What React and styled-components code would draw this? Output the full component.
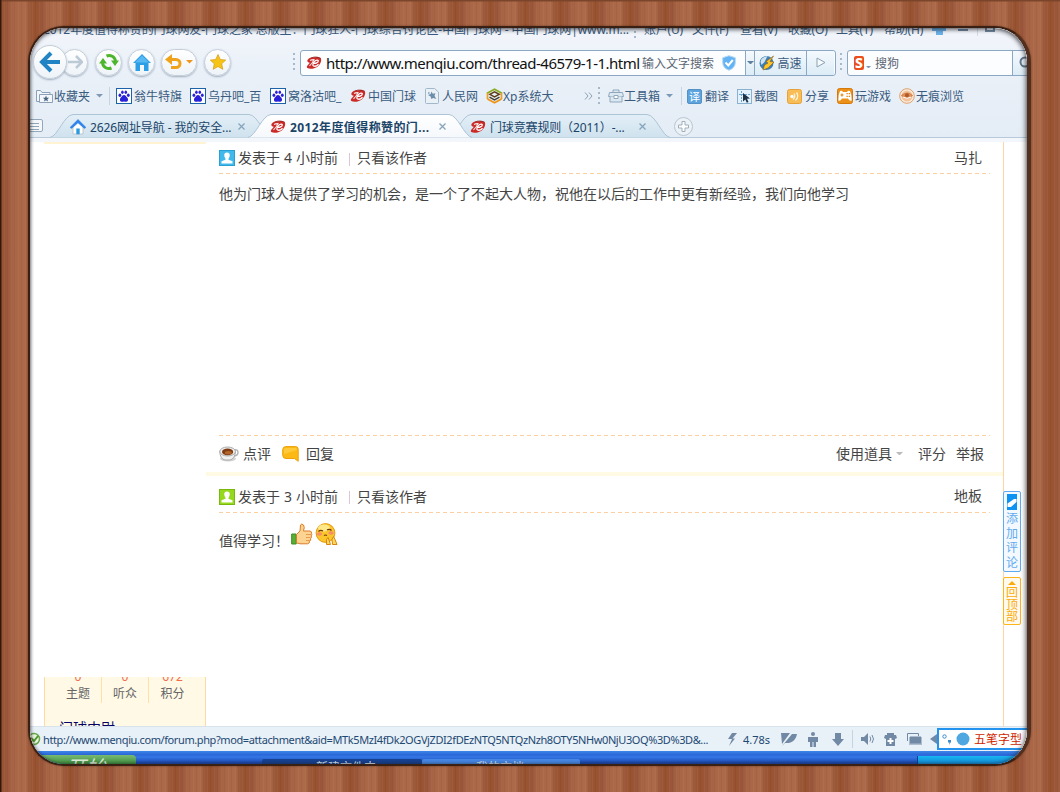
import styled, { createGlobalStyle } from 'styled-components'

const GlobalStyle = createGlobalStyle`
  *{ box-sizing:border-box; }
  body{
    margin:0;
    font-family:"Noto Sans","Noto Sans CJK SC",sans-serif;
    font-size:12px;
    overflow:hidden;
  }
  svg{ display:block; flex:none; }
`

/* ---------- icons ---------- */

const Paw = () => (
  <svg width="16" height="16" viewBox="0 0 16 16">
    <rect x=".5" y=".5" width="15" height="15" fill="#fff" stroke="#1c62a8" />
    <g fill="#2a22d8">
      <ellipse cx="3.9" cy="7.200" rx="1.400" ry="1.800" />
      <ellipse cx="6.400" cy="4.200" rx="1.300" ry="1.800" />
      <ellipse cx="9.800" cy="4.200" rx="1.300" ry="1.800" />
      <ellipse cx="12.300" cy="7.200" rx="1.400" ry="1.800" />
      <path d="M8 7c1.500 0 2 1.400 3.100 2.500 1.500 1.500 1.200 4-.7 4.200-1 .1-1.500-.3-2.400-.3s-1.400.4-2.400.3c-1.900-.2-2.200-2.700-.7-4.200C6 8.400 6.500 7 8 7z" />
    </g>
  </svg>
)

const Menqiu = () => (
  <svg width="16" height="16" viewBox="0 0 16 16">
    <path d="M1.500 5C3 2.500 6 2 9 2.300 11 1.600 13.500 2 15 3.500c.6 2-.3 4.500-1.500 6C12 12 8 14 4.500 13.800 2.500 13.700.8 13 .8 12c.2-1.500 1.700-2.500 3-4.300C2.200 7.600.8 6.700 1.500 5z" fill="#cb2a28" />
    <path d="M4 5.500c1.200-.8 2.500-1 4-.9C7.200 6.500 5.500 9 3.500 10.800" fill="none" stroke="#f8e6e4" strokeWidth="1.100" />
    <path d="M7.500 8.300c2 .4 4.600-.6 4.800-2.300 0-1.200-2.300-1-3.600.3C7 8 6.200 10.300 7.500 11c1.500.6 3.700-.4 5-1.800" fill="none" stroke="#fff" strokeWidth="1.300" />
    <path d="M5 3c3-1.300 6-1.400 9.500.2" fill="none" stroke="#8e2725" strokeWidth=".8" />
  </svg>
)

const Caret = ({ color = '#7e99b5', w = 8 }) => (
  <svg width={w} height={w / 2} viewBox="0 0 8 4"><path d="M0 0h8L4 4z" fill={color} /></svg>
)

const Folder = () => (
  <svg width="17" height="15" viewBox="0 0 17 15" fill="#f3f7fb" stroke="#8ba1b8">
    <path d="M.5 12.500v-11h4l1.500 2h8v2M.5 12.500h3" />
    <path d="M3.500 5.500h13v8h-13z" />
    <path d="M10 6.500l.9 2.200 2.300.1-1.800 1.400.6 2.300-2-1.300-2 1.300.6-2.300-1.800-1.400 2.300-.1z" fill="#47647f" stroke="none" />
  </svg>
)

const PageIcon = () => (
  <svg width="14" height="16" viewBox="0 0 14 16">
    <path d="M.5 1.500q0-1 1-1h8l4 3.500v10.500q0 1-1 1h-11q-1 0-1-1z" fill="#e9f1f7" stroke="#a2b7c9" />
    <path d="M6.500 3.500l1.300 2.200 2.700-.4-1 2.400 1.800 3.300-3-1-2 1-.7-2.500L3 7l2.700-.9z" fill="#6d8eab" />
    <circle cx="3.800" cy="5" r=".9" fill="#8ca6bc" />
  </svg>
)

const XpIcon = () => (
  <svg width="17" height="16" viewBox="0 0 17 16" fill="none" strokeWidth="1.700">
    <path d="M1.500 5.200V5L8.500 1.300 15.500 5v.2" stroke="#8aab1c" />
    <path d="M1.500 5v6M15.500 5v6" stroke="#e8a21c" />
    <path d="M3.800 6.300l4.700-2.500 4.700 2.500-4.700 2.500z" stroke="#5f3b17" strokeWidth="1.500" />
    <path d="M3.500 9.200l5 2.600 5-2.600" stroke="#433d36" strokeWidth="1.500" />
    <path d="M1.500 11l7 3.700 7-3.700" stroke="#ef9413" />
  </svg>
)

const ToolBox = () => (
  <svg width="16" height="14" viewBox="0 0 16 14" fill="#dce8f1" stroke="#8fa8bd">
    <path d="M5 3V1h6v2M1.500 3.500h13l1 4H.5z" />
    <path d="M2 7.500v5.500h12V7.500" />
    <path d="M6 6.500h4v3H6z" fill="#fff" />
  </svg>
)

const Glyph = styled.span`
  width:15px;
  height:15px;
  border-radius:2px;
  border:1px solid #5691c6;
  background:#5ba4df;
  color:#fff;
  font-size:11px;
  line-height:13px;
  text-align:center;
`

const ShotIcon = () => (
  <svg width="15" height="15" viewBox="0 0 15 15">
    <rect x=".5" y=".5" width="14" height="14" fill="#e2f1fb" stroke="#8ab1d0" />
    <path d="M4.500 2v11M2 5.500h11" stroke="#6ba4cf" strokeDasharray="2 1" />
    <path d="M6 4l7 5.500-3 .3 1.500 3.200-1.700.7-1.500-3.200L6 12.500z" fill="#1c3147" />
  </svg>
)

const ShareIcon = () => (
  <svg width="15" height="15" viewBox="0 0 15 15">
    <rect x=".5" y=".5" width="14" height="14" rx="2" fill="#f8bd56" stroke="#e5a13a" />
    <circle cx="5" cy="7.500" r="1.700" fill="#fff" />
    <path d="M7 4.500q2 3-1 6M9.500 3.500q3 4-1 8" fill="none" stroke="#fff4d9" strokeWidth="1.300" />
  </svg>
)

const GameIcon = () => (
  <svg width="16" height="16" viewBox="0 0 16 16">
    <rect x=".5" y=".5" width="15" height="15" rx="2" fill="#ec9118" stroke="#d5790b" />
    <path d="M3 3q2-1 3 1h4q1-2 3-1 2 4 1.700 9.500-2 1-3.700-2H5q-1.700 3-3.700 2Q1 7 3 3z" fill="#fff" />
    <path d="M3.500 7h3M5 5.500v3M9.500 5.700h1.300M9.500 8.300h1.300M11.700 5.700H13M11.700 8.300H13" stroke="#e0840f" strokeWidth="1.200" />
  </svg>
)

const EyeIcon = () => (
  <svg width="16" height="16" viewBox="0 0 16 16">
    <circle cx="8" cy="8" r="7.300" fill="#fbeee1" stroke="#dea06d" />
    <circle cx="8" cy="8" r="5.600" fill="#f3c39c" />
    <path d="M2.500 7.500Q8 2.500 13.500 7.500 8 12 2.500 7.500z" fill="#e2925a" stroke="#c8713c" strokeWidth=".8" />
    <circle cx="8" cy="7.300" r="2" fill="#b05a2a" />
    <path d="M4 9q4 2.500 8 0" stroke="#fff" fill="none" />
  </svg>
)

const NavHouse = () => (
  <svg width="18" height="17" viewBox="0 0 18 17">
    <path d="M9 0l9 9h-2.500v8H11v-6H7v6H2.500V9H0z" fill="#2b9ee6" />
    <path d="M9 1.500L16 8.500H2z" fill="#57b8f2" />
  </svg>
)

const TabHouse = () => (
  <svg width="16" height="16" viewBox="0 0 16 16">
    <path d="M3 8l5-5 5 5v7H3z" fill="#fff" stroke="#b4bcc5" strokeWidth=".8" />
    <path d="M8 .5L15.500 8q.3 1.500-1.300 1.300L8 3.800 1.800 9.300Q.2 9.500.5 8z" fill="#2f86f0" stroke="#1c6cd0" strokeWidth=".5" />
    <path d="M6.300 9.500h3.400v5.800H6.300z" fill="#2d9ade" />
  </svg>
)

const Close = () => (
  <svg width="7" height="7" viewBox="0 0 7 7"><path d="M.5.5l6 6M6.500.5l-6 6" stroke="#86a5bd" strokeWidth="1.300" /></svg>
)

const UserIcon = ({ color, edge }) => (
  <svg width="16" height="16" viewBox="0 0 16 16">
    <rect x=".5" y=".5" width="15" height="15" fill={color} stroke={edge} />
    <path d="M8 2.500c2.200 0 3 1.500 2.700 3.500-.2 1.300-.8 2-1.200 2.700v1l4 1.500V13.500h-11v-2.300l4-1.500v-1C6.100 8 5.500 7.300 5.300 6 5 4 5.800 2.500 8 2.500z" fill="#fff" />
  </svg>
)

const Cup = () => (
  <svg width="20" height="16" viewBox="0 0 20 16">
    <ellipse cx="9" cy="12.800" rx="8" ry="2.700" fill="#d4d4d4" />
    <path d="M15 4q4-1 4 2.500T14 10" fill="none" stroke="#b6b6b6" strokeWidth="1.500" />
    <path d="M.7 5Q1 13 6 14h5q5-1 5.500-9z" fill="#f0f0f0" stroke="#aaa" />
    <ellipse cx="8.600" cy="5.500" rx="7.800" ry="4.500" fill="#eee" stroke="#aaa" />
    <ellipse cx="8.600" cy="5.900" rx="5.600" ry="3.300" fill="#7f3c12" />
    <ellipse cx="9.300" cy="6.800" rx="3.500" ry="1.700" fill="#b4652c" />
  </svg>
)

const Bubble = () => (
  <svg width="17" height="16" viewBox="0 0 17 16">
    <path d="M3.500.6h10Q16 .6 16.200 3v12.300L12.500 12.500H4Q1 12.500.7 9.500V3.500Q1 .8 3.500.6z" fill="#fdb913" stroke="#eda00c" />
    <path d="M4 2h9q2 0 2 2L2 8V4q0-2 2-2z" fill="#ffd24a" opacity=".7" />
  </svg>
)

const Thumb = () => (
  <svg width="22" height="22" viewBox="0 0 22 22">
    <path d="M.7 11h4.500v10H.7z" fill="#5aae35" stroke="#3c8a24" />
    <path d="M5.500 11.500L9 8 9.500 2q1-2 3 0 1.500 2 0 6h6.500q2 .5 1.500 2.300.8 1.500-.3 2.600.8 1.600-.6 2.800.5 1.700-1 2.600.2 2-2 2.500H9l-3.500-1z" fill="#fcd391" stroke="#dc7d2a" />
    <path d="M15 11.500h5M15 14.500h4.500M15 17.500h4" stroke="#e79b4c" fill="none" />
  </svg>
)

const Smiley = () => (
  <svg width="23" height="23" viewBox="0 0 23 23">
    <circle cx="10.500" cy="10" r="9.400" fill="#fbc62c" stroke="#e49a17" />
    <ellipse cx="9" cy="5" rx="6" ry="3.500" fill="#fff0a0" opacity=".8" />
    <ellipse cx="4.500" cy="11" rx="2.700" ry="1.800" fill="#f68d69" />
    <ellipse cx="16" cy="10" rx="2.700" ry="1.800" fill="#f68d69" />
    <path d="M3.500 8.500q2-2 4.500-.5M12 7q2.500-1.500 4.500.5M9 12.500q1.500-1 3 0" fill="none" stroke="#70380c" strokeWidth="1.200" />
    <path d="M11.500 21.500v-5l1.500-2 1 2.500 1.500 4.500zM17.500 21.500l-.5-5 1.500-3 1.500 3 2 5z" fill="#ffd75a" stroke="#d7850e" />
  </svg>
)

/* ---------- frame ---------- */

const Wood = styled.div`
  width:1060px;
  height:792px;
  padding:26px 28px 26px 28px;
  background:
    linear-gradient(90deg, #33180c 0 1px, transparent 2px),
    linear-gradient(180deg, #7b452b 0 1px, transparent 2px),
    repeating-linear-gradient(90deg, rgba(70,25,5,.07) 0 1px, transparent 1px 4px, rgba(255,190,140,.06) 4px 5px, transparent 5px 7px),
    repeating-linear-gradient(90deg, #98522f 0px, #99563a 6px, #a96647 14px, #ac6a4b 25px, #9a5738 31px, #98522f 35px);
`
const Screen = styled.div`
  position:relative;
  display:flex;
  flex-direction:column;
  width:1003px;
  height:740px;
  border:2px solid #3a2013;
  border-right:4px solid #51301f;
  border-radius:36px;
  overflow:hidden;
  background:#fff;
  box-shadow:0 0 2px 0 rgba(50,20,5,.6);
  &::after{
    content:'';
    position:absolute;
    inset:0;
    border-radius:33px;
    box-shadow:inset 0 2px 4px rgba(20,20,30,.45), inset -2px 0 5px rgba(30,30,30,.4), inset 1px 0 3px rgba(30,30,30,.3);
    pointer-events:none;
  }
`
const Chrome = styled.div`
  flex:none;
  height:114px;
  background:linear-gradient(#f3f6fb, #e9f0f8 40%, #e4ecf5);
  color:#3a5b7e;
`
const TitleRow = styled.div`
  display:flex;
  height:14px;
  padding-left:13px;
  line-height:18px;
  white-space:nowrap;
  span{
    margin-top:-7px;
  }
`
const Title = styled.span`
  flex:none;
  width:586px;
  letter-spacing:-0.08px;
`
const Menu = styled.span`
  flex:none;
  width:48px;
  letter-spacing:-0.2px;
`
const NavRow = styled.div`
  display:flex;
  align-items:center;
  height:42px;
  padding:1px 0 3px 3px;
`
const Round = styled.div`
  flex:none;
  display:flex;
  align-items:center;
  justify-content:center;
  gap:4px;
  width:${p => p.$w || 27}px;
  height:${p => p.$h || 27}px;
  margin-left:${p => p.$ml ?? 6}px;
  z-index:${p => p.$top ? 1 : 0};
  border-radius:20px;
  border:1px solid #c4ced9;
  background:linear-gradient(#fff, #eef3f8);
  box-shadow:0 1px 2px rgba(70,90,120,.45);
`
const Dots = styled.span`
  flex:none;
  width:2px;
  height:${p => p.$h || 18}px;
  margin:0 ${p => p.$mr}px 0 ${p => p.$ml}px;
  background:repeating-linear-gradient(#a5b9cd 0 2px, transparent 2px 5px);
`
const Field = styled.div`
  flex:none;
  display:flex;
  align-items:center;
  width:${p => p.$w}px;
  height:26px;
  margin-top:1px;
  border:1px solid #8ba7c3;
  border-radius:3px;
  background:#fcfdff;
  overflow:hidden;
`
const Url = styled.span`
  flex:none;
  width:316px;
  margin-left:4px;
  font-size:15px;
  letter-spacing:-0.5px;
  color:#111;
  white-space:nowrap;
`
const Hint = styled.span`
  flex:none;
  width:${p => p.$w}px;
  color:#5b6672;
`
const Cell = styled.div`
  flex:none;
  display:flex;
  align-items:center;
  justify-content:center;
  gap:2px;
  width:${p => p.$w}px;
  height:24px;
  border-left:1px solid #8ba7c3;
  background:linear-gradient(#f4f9fd, #dcecf6);
`
const Sogou = styled.span`
  width:14px;
  height:14px;
  margin-left:6px;
  border-radius:2px;
  background:#ea4f1b;
  color:#fff;
  font-weight:800;
  font-size:14px;
  line-height:13px;
  text-align:center;
`
const Drop = styled.span`
  margin:9px 4px 0 2px;
`
const Bookmarks = styled.div`
  display:flex;
  align-items:center;
  height:28px;
  padding:0 0 4px 6px;
`
const Mark = styled.div`
  flex:none;
  display:flex;
  align-items:center;
  gap:${p => p.$gap ?? 2}px;
  width:${p => p.$w}px;
  white-space:nowrap;
`
const Rule = styled.span`
  flex:none;
  width:1px;
  height:18px;
  background:#c6d3e0;
  margin-right:${p => p.$mr}px;
`
const TabRow = styled.div`
  display:flex;
  align-items:flex-end;
  height:30px;
  border-bottom:4px solid #f3f6fb;
  box-shadow:inset 0 -1px 0 #b7c9da;
`
const ListButton = styled.div`
  flex:none;
  width:14px;
  height:13px;
  margin:0 6px 6px -1px;
  border:1px solid #93a8bc;
  border-radius:2px;
  background:repeating-linear-gradient(#f5f8fb 0 2px, #91a5b8 2px 3px) 0 1px / 9px 9px no-repeat #f5f8fb;
`
const TabBox = styled.div`
  flex:none;
  position:relative;
  display:flex;
  align-items:center;
  width:${p => p.$w}px;
  height:25px;
  margin-left:${p => p.$ml}px;
  padding:2px 0 0 ${p => p.$pl}px;
  z-index:${p => p.$active ? 2 : 1};
  color:#1a4468;
  font-weight:${p => p.$active ? 700 : 400};
  > svg.shape{
    position:absolute;
    inset:0;
    z-index:-1;
  }
`
const TabText = styled.span`
  width:${p => p.$w}px;
  margin-left:4px;
  letter-spacing:${p => p.$ls || 0}px;
  white-space:nowrap;
`
const Plus = styled.div`
  width:19px;
  height:19px;
  margin:0 0 2px 4px;
  border:1px solid #b8c6d3;
  border-radius:50%;
  background:#edf2f7;
  display:flex;
  align-items:center;
  justify-content:center;
`

/* ---------- page ---------- */

const Page = styled.div`
  flex:none;
  display:flex;
  height:584px;
  background:#fff;
  color:#444;
`
const Side = styled.div`
  width:162px;
  margin-left:14px;
  display:flex;
  flex-direction:column;
  justify-content:flex-end;
  border-top:2px solid #fff3d2;
`
const Profile = styled.div`
  height:49px;
  border:1px solid #ffd9a6;
  border-width:0 1px;
  background:#fff9e6;
  overflow:hidden;
`
const Stats = styled.div`
  display:flex;
  height:26px;
  padding-left:10px;
`
const Stat = styled.div`
  width:47px;
  border-right:${p => p.$last ? 'none' : '1px solid #ffdfab'};
  text-align:center;
  color:#666;
  line-height:17px;
  b{
    display:block;
    height:17px;
    margin-top:-9px;
    font-weight:400;
    color:#f26c4f;
  }
`
const Rank = styled.div`
  margin:15px 0 0 14px;
  font-size:14px;
  line-height:20px;
  color:#000066;
`
const Main = styled.div`
  width:798px;
  border-right:1px solid #ffd5a2;
  font-size:14px;
  line-height:20px;
`
const dashes = 'repeating-linear-gradient(90deg, #fcd0a0 0 4px, transparent 4px 7px)'
const PostHead = styled.div`
  display:flex;
  align-items:center;
  height:${p => p.$h}px;
  margin:0 13px;
  padding:${p => p.$pt}px 8px 1px 0;
  background:${dashes} 0 100% / 100% 1px no-repeat;
  white-space:pre;
  i{
    width:1px;
    height:13px;
    margin:2px 7px 0 11px;
    background:#dcc6d8;
  }
  em{
    margin-left:auto;
    font-style:normal;
    padding-bottom:1px;
  }
`
const When = styled.span`
  display:flex;
  gap:4px;
  margin-left:3px;
`
const Body = styled.div`
  display:flex;
  align-items:flex-start;
  height:${p => p.$h}px;
  padding:10px 0 0 13px;
`
const Foot = styled.div`
  display:flex;
  align-items:center;
  height:37px;
  margin:0 13px;
  padding-right:6px;
  background:${dashes} 0 0 / 100% 1px no-repeat;
`
const FootLink = styled.span`
  display:flex;
  align-items:center;
  gap:${p => p.$gap || 4}px;
  margin-left:${p => p.$push ? 'auto' : `${p.$ml || 0}px`};
`
const Band = styled.div`
  height:4px;
  background:#fffae3;
`
const Comment = styled.span`
  width:72px;
  padding-top:8px;
`
const Gutter = styled.div`
  margin-left:-1px;
  padding-top:349px;
`
const Float = styled.div`
  display:flex;
  flex-direction:column;
  align-items:center;
  width:18px;
  height:${p => p.$h}px;
  margin-bottom:5px;
  padding-top:${p => p.$pt}px;
  border:1px solid ${p => p.$line};
  border-radius:2px;
  background:${p => p.$bg};
  color:${p => p.$color};
  font-size:12px;
  line-height:${p => p.$lh}px;
  svg{
    margin-bottom:${p => p.$mb}px;
  }
`

/* ---------- bottom ---------- */

const Status = styled.div`
  flex:none;
  display:flex;
  align-items:center;
  height:25px;
  border-top:1px solid #d9e3ec;
  background:#e8f0f8;
  color:#1d4972;
`
const Link = styled.span`
  flex:none;
  width:684px;
  margin-left:2px;
  font-size:11px;
  letter-spacing:-0.4px;
  white-space:nowrap;
`
const Slot = styled.span`
  flex:none;
  display:flex;
  width:${p => p.$w}px;
  font-size:11px;
`
const Ime = styled.div`
  flex:none;
  display:flex;
  align-items:center;
  gap:4px;
  width:100px;
  height:22px;
  padding-left:3px;
  border:2px solid #2493ee;
  background:#fff;
  color:#cf2500;
`
const Taskbar = styled.div`
  flex:1;
  display:flex;
  align-items:flex-end;
  background:linear-gradient(#3c85ea, #2a66d8 30%, #3577e5 45%, #1c4cb8 90%);
`
const Start = styled.div`
  width:106px;
  height:9px;
  border-radius:0 4px 0 0;
  background:linear-gradient(#79b973, #3e9140);
  overflow:hidden;
  color:#dfeeda;
  font-size:20px;
  font-style:italic;
  line-height:25px;
  padding-left:36px;
`
const Task = styled.div`
  width:${p => p.$w}px;
  height:5px;
  margin-left:${p => p.$ml}px;
  padding-left:54px;
  border-radius:2px 2px 0 0;
  background:${p => p.$bg};
  color:#dfe8f5;
  line-height:17px;
  overflow:hidden;
`
const Tray = styled.div`
  width:110px;
  height:8px;
  margin-left:auto;
  border-left:1px solid #0b3f92;
  background:linear-gradient(#18b5f2, #148ad8);
`

const marks = [
  { icon: <Paw />, text: '翁牛特旗', w: 74 },
  { icon: <Paw />, text: '乌丹吧_百', w: 80 },
  { icon: <Paw />, text: '窝洛沽吧_', w: 80 },
  { icon: <Menqiu />, text: '中国门球', w: 75 },
  { icon: <PageIcon />, text: '人民网', w: 61, gap: 3 },
  { icon: <XpIcon />, text: 'Xp系统大', w: 98, gap: 0 },
]

const tools = [
  { icon: <Glyph>译</Glyph>, text: '翻译', w: 50, gap: 3 },
  { icon: <ShotIcon />, text: '截图', w: 50 },
  { icon: <ShareIcon />, text: '分享', w: 50, gap: 3 },
  { icon: <GameIcon />, text: '玩游戏', w: 62 },
  { icon: <EyeIcon />, text: '无痕浏览', w: 70, gap: 1 },
]

const Tab = ({ w, ml, pl, active, icon, text, textWidth, ls }) => (
  <TabBox $w={w} $ml={ml} $pl={pl} $active={active}>
    <svg className="shape" width={w} height="25" viewBox={`0 0 ${w} 25`}>
      <defs>
        <linearGradient id={active ? 'tabOn' : 'tabOff'} x2="0" y2="1">
          <stop offset="0" stopColor={active ? '#fff' : '#e3eff7'} />
          <stop offset="1" stopColor={active ? '#f5f8fc' : '#cfe2ee'} />
        </linearGradient>
      </defs>
      <path
        d={`M0 24.500C8 23 14 2 23 1.500H${w - 23}C${w - 14} 2 ${w - 8} 23 ${w} 24.500`}
        fill={`url(#${active ? 'tabOn' : 'tabOff'})`}
        stroke="#adc3d6"
      />
    </svg>
    {icon}
    <TabText $w={textWidth} $ls={ls}>{text}</TabText>
    <Close />
  </TabBox>
)

const App = () => {
  return (
    <Wood>
      <GlobalStyle />
      <Screen>
        <Chrome>
          <TitleRow>
            <Title>2012年度值得称赞的门球网友-门球之家 总版主：门球狂人-门球综合讨论区-中国门球网 - 中国门球网|www.m...</Title>
            <Dots $ml={5} $mr={8} $h={18} />
            <Menu>账户(U)</Menu>
            <Menu>文件(F)</Menu>
            <Menu>查看(V)</Menu>
            <Menu>收藏(O)</Menu>
            <Menu>工具(T)</Menu>
            <Menu>帮助(H)</Menu>
            <svg width="80" height="8" viewBox="0 0 80 8">
              <path d="M0 0h14v3h-3v4H4V3H0z" fill="#6bb2ea" />
              <path d="M26 2h10M54 0v3h8V0" stroke="#7189a1" strokeWidth="2" fill="none" />
              <path d="M45.500 0v8" stroke="#d3dce5" />
            </svg>
          </TitleRow>
          <NavRow>
            <Round $w={34} $h={34} $ml={0} $top>
              <svg width="22" height="22" viewBox="0 0 22 22"><path d="M12 2L3 11l9 9M3 11h18" fill="none" stroke="#1f83c4" strokeWidth="4" /></svg>
            </Round>
            <Round $w={27} $ml={-6}>
              <svg width="16" height="14" viewBox="0 0 16 14"><path d="M9 1l6 6-6 6M15 7H1" fill="none" stroke="#bccad6" strokeWidth="2.500" /></svg>
            </Round>
            <Round $ml={7}>
              <svg width="20" height="18" viewBox="0 0 20 18">
                <path d="M3.500 10a6.500 6.500 0 0 0 9 5M16.500 8a6.500 6.500 0 0 0-9-5" fill="none" stroke="#4db52c" strokeWidth="3" />
                <path d="M0 10.500L4 5l4 5.500zM12 7.500h8L16 13z" fill="#4db52c" />
              </svg>
            </Round>
            <Round><NavHouse /></Round>
            <Round $w={36}>
              <svg width="17" height="16" viewBox="0 0 17 16">
                <path d="M4 5.500h7a4 4 0 0 1 0 8H6" fill="none" stroke="#f0a31a" strokeWidth="3" />
                <path d="M7 0v11L0 5.500z" fill="#f0a31a" />
              </svg>
              <Caret color="#ee951a" w={7} />
            </Round>
            <Round $ml={7}>
              <svg width="16" height="16" viewBox="0 0 16 16"><path d="M8 .5l2.300 5 5.400.6-4 3.700 1.100 5.500L8 12.500l-4.800 2.800 1.100-5.500-4-3.700 5.400-.6z" fill="#f6c416" stroke="#d59b10" strokeWidth=".7" /></svg>
            </Round>
            <Dots $ml={62} $mr={5} />
            <Field $w={536}>
              <span style={{ width: 5 }} />
              <Menqiu />
              <Url>http://www.menqiu.com/thread-46579-1-1.html</Url>
              <Hint $w={80}>输入文字搜索</Hint>
              <svg width="14" height="16" viewBox="0 0 14 16">
                <path d="M7 .7l6.300 2v5q0 5-6.300 7.600Q.7 12.700.7 7.700v-5z" fill="#61b3f6" stroke="#b6d8f2" />
                <path d="M3.500 7.500l2.800 3 4.500-5.500" fill="none" stroke="#fff" strokeWidth="2" />
              </svg>
              <span style={{ width: 9 }} />
              <Cell $w={9}><Caret color="#5e7f9e" w={7} /></Cell>
              <Cell $w={52}>
                <svg width="16" height="16" viewBox="0 0 16 16">
                  <circle cx="7.500" cy="8" r="7" fill="#3c7eb5" />
                  <path d="M1.500 7q.5-5 7-6l-3 6-3 3z" fill="#cfe2ee" />
                  <path d="M4 15l1.500-5L9 8l-2-1.500L14.500 1 11 6.500l4 .5-6 6z" fill="#ffc62a" stroke="#8a5b14" strokeWidth=".6" />
                </svg>
                高速
              </Cell>
              <Cell $w={28}>
                <svg width="10" height="11" viewBox="0 0 10 11"><path d="M1 1l8 4.500L1 10z" fill="#f7fbfe" stroke="#8ba0b3" /></svg>
              </Cell>
            </Field>
            <Dots $ml={4} $mr={5} />
            <Field $w={190}>
              <Sogou>S</Sogou>
              <Drop><Caret w={5} /></Drop>
              <Hint $w={137}>搜狗</Hint>
              <Cell $w={24}>
                <svg width="14" height="14" viewBox="0 0 14 14"><circle cx="7" cy="6" r="4.500" fill="none" stroke="#61758a" strokeWidth="2" /></svg>
              </Cell>
            </Field>
          </NavRow>
          <Bookmarks>
            <Mark $w={60} $gap={1}><Folder />收藏夹</Mark>
            <Slot $w={13}><Caret w={7} /></Slot>
            <Rule $mr={6} />
            {marks.map((m) => (
              <Mark key={m.text} $w={m.w} $gap={m.gap}>{m.icon}{m.text}</Mark>
            ))}
            <svg width="9" height="8" viewBox="0 0 9 8"><path d="M1 .5L4 4 1 7.500M5 .5L8 4 5 7.500" fill="none" stroke="#8da3b8" /></svg>
            <Dots $ml={5} $mr={8} />
            <Mark $w={58} $gap={0}><ToolBox />工具箱</Mark>
            <Slot $w={15}><Caret w={7} /></Slot>
            <Rule $mr={5} />
            {tools.map((m) => (
              <Mark key={m.text} $w={m.w} $gap={m.gap}>{m.icon}{m.text}</Mark>
            ))}
          </Bookmarks>
          <TabRow>
            <ListButton />
            <Tab w={222} ml={1} pl={20} icon={<TabHouse />} text="2626网址导航 - 我的安全..." textWidth={148} ls={-0.1} />
            <Tab w={224} ml={-24} pl={22} active icon={<Menqiu />} text="2012年度值得称赞的门..." textWidth={149} ls={0.4} />
            <Tab w={222} ml={-24} pl={22} icon={<Menqiu />} text="门球竞赛规则（2011）-..." textWidth={149} ls={-0.15} />
            <Plus>
              <svg width="11" height="11" viewBox="0 0 11 11"><path d="M4 .5h3V4h3.500v3H7v3.500H4V7H.5V4H4z" fill="#fff" stroke="#9eafbe" /></svg>
            </Plus>
          </TabRow>
        </Chrome>

        <Page>
          <Side>
            <Profile>
              <Stats>
                <Stat><b>0</b>主题</Stat>
                <Stat><b>0</b>听众</Stat>
                <Stat $last><b>672</b>积分</Stat>
              </Stats>
              <Rank>门球中尉</Rank>
            </Profile>
          </Side>
          <Main>
            <PostHead $h={32} $pt={1}>
              <UserIcon color="#41b9ea" edge="#2b9fd2" />
              <When><span>发表于</span><span>4</span><span>小时前</span></When>
              <i />只看该作者<em>马扎</em>
            </PostHead>
            <Body $h={261}>他为门球人提供了学习的机会，是一个了不起大人物，祝他在以后的工作中更有新经验，我们向他学习</Body>
            <Foot>
              <FootLink><Cup />点评</FootLink>
              <FootLink $ml={11} $gap={7}><Bubble />回复</FootLink>
              <FootLink $push>使用道具<Caret color="#bbb" w={7} /></FootLink>
              <FootLink $ml={15}>评分</FootLink>
              <FootLink $ml={10}>举报</FootLink>
            </Foot>
            <Band />
            <PostHead $h={37} $pt={5}>
              <UserIcon color="#96d81d" edge="#79b80e" />
              <When><span>发表于</span><span>3</span><span>小时前</span></When>
              <i />只看该作者<em>地板</em>
            </PostHead>
            <Body $h={200}>
              <Comment>值得学习！</Comment>
              <Thumb />
              <span style={{ marginLeft: 2 }}><Smiley /></span>
            </Body>
          </Main>
          <Gutter>
            <Float $h={81} $pt={2} $mb={2} $lh={14.5} $line="#62aaf0" $bg="#f3f9ff" $color="#62aaf0">
              <svg width="10" height="16" viewBox="0 0 10 16">
                <path d="M0 0h10v16H0z" fill="#0d93f2" />
                <path d="M.5 13V9.500L7 5h2.500v3L4 13z" fill="#fff" />
              </svg>
              <span>添</span><span>加</span><span>评</span><span>论</span>
            </Float>
            <Float $h={48} $pt={3} $mb={2} $lh={12} $line="#ffb41b" $bg="#fffaed" $color="#fbab0c">
              <svg width="8" height="4" viewBox="0 0 8 4"><path d="M0 4h8L4 0z" fill="#fbab0c" /></svg>
              <span>回</span><span>顶</span><span>部</span>
            </Float>
          </Gutter>
        </Page>

        <Status>
          <svg width="11" height="14" viewBox="0 0 11 14">
            <circle cx="4" cy="7" r="5.500" fill="#eaf6df" stroke="#69a74a" strokeWidth="1.500" />
            <path d="M1 6l3 3 4-5" fill="none" stroke="#4f982e" strokeWidth="2" />
          </svg>
          <Link>http://www.menqiu.com/forum.php?mod=attachment&amp;aid=MTk5MzI4fDk2OGVjZDI2fDEzNTQ5NTQzNzh8OTY5NHw0NjU3OQ%3D%3D&amp;...</Link>
          <Slot $w={16}>
            <svg width="11" height="13" viewBox="0 0 11 13"><path d="M10 0H5L1 6h4l-3 7 6-7.500H5.500z" fill="#7189a5" /></svg>
          </Slot>
          <Slot $w={38}>4.78s</Slot>
          <Slot $w={27}>
            <svg width="16" height="13" viewBox="0 0 16 13"><path d="M0 0h9L1 11zM1 13L11 1h5q-1 7-8 9H4z" fill="#7189a5" /></svg>
          </Slot>
          <Slot $w={24}>
            <svg width="10" height="15" viewBox="0 0 10 15">
              <circle cx="5" cy="2" r="2" fill="#7189a5" />
              <path d="M0 5h10v5H8V7v8H5.500v-5h-1v5H2V7v3H0z" fill="#7189a5" />
            </svg>
          </Slot>
          <Slot $w={20}>
            <svg width="12" height="13" viewBox="0 0 12 13"><path d="M3 0h6v6h3l-6 7-6-7h3z" fill="#7189a5" /></svg>
          </Slot>
          <Rule $mr={8} />
          <Slot $w={23}>
            <svg width="14" height="12" viewBox="0 0 14 12">
              <path d="M0 4h3l4-4v12L3 8H0z" fill="#7189a5" />
              <path d="M9 3.500q1.500 2.500 0 5M11 2q3 4 0 8" fill="none" stroke="#7189a5" />
            </svg>
          </Slot>
          <Slot $w={23}>
            <svg width="13" height="13" viewBox="0 0 13 13">
              <path d="M3 0h7v2h2l1 3-2 1v7H2V6L0 5l1-3h2z" fill="#7189a5" />
              <path d="M6.500 5v6M3.500 8h6" stroke="#fff" strokeWidth="2" />
            </svg>
          </Slot>
          <Slot $w={23}>
            <svg width="15" height="12" viewBox="0 0 15 12">
              <path d="M.5 8V.5h11V3" fill="none" stroke="#7189a5" />
              <path d="M3 4h11v6H3zM2 11h13" fill="#7189a5" stroke="#7189a5" />
            </svg>
          </Slot>
          <Slot $w={7}>
            <svg width="7" height="10" viewBox="0 0 7 10"><path d="M7 0v10L0 5z" fill="#7189a5" /></svg>
          </Slot>
          <Ime>
            <svg width="10" height="11" viewBox="0 0 10 11">
              <circle cx="2.500" cy="2.500" r="1.700" fill="none" stroke="#3b8ecb" />
              <path d="M6 6h3v2l-2 3 .5-2.500H6z" fill="#3b8ecb" />
            </svg>
            <svg width="14" height="14" viewBox="0 0 14 14"><circle cx="7" cy="7" r="6.500" fill="#4fa7e1" /></svg>
            五笔字型
          </Ime>
        </Status>
        <Taskbar>
          <Start>开始</Start>
          <Task $w={160} $ml={126} $bg="#174293">新建文件夹</Task>
          <Task $w={158} $ml={0} $bg="#4789e8">我的文档</Task>
          <Tray />
        </Taskbar>
      </Screen>
    </Wood>
  )
}

export default App
